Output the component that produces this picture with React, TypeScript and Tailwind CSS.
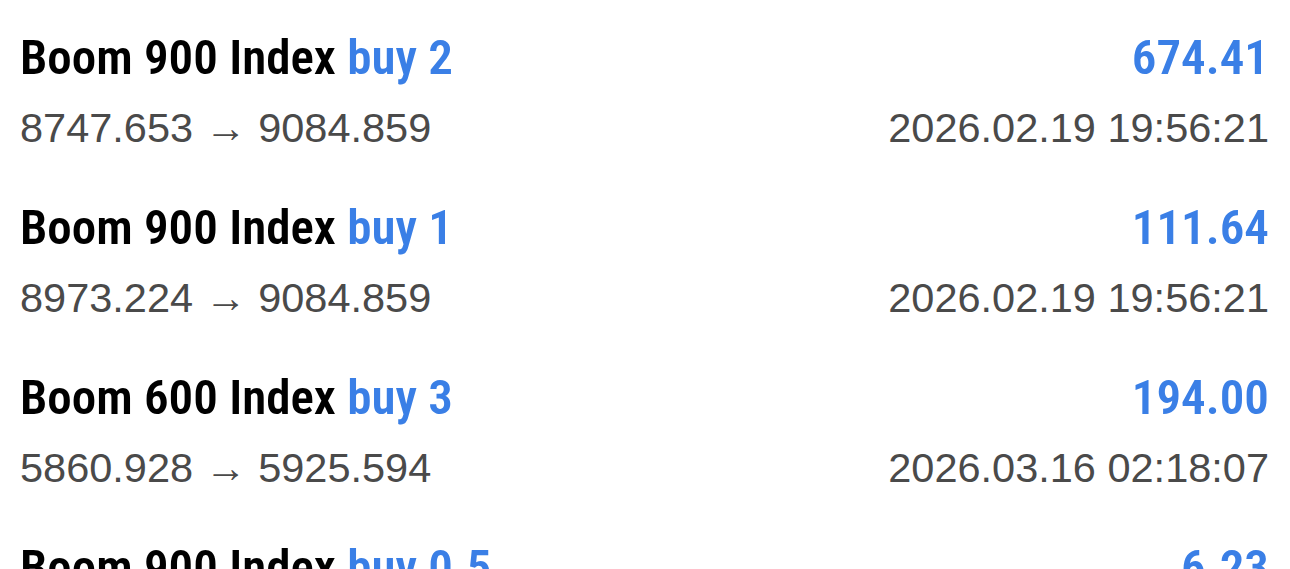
const rows = [
  { sym: "Boom 900 Index", side: "buy 2", profit: "674.41", from: "8747.653", to: "9084.859", time: "2026.02.19 19:56:21" },
  { sym: "Boom 900 Index", side: "buy 1", profit: "111.64", from: "8973.224", to: "9084.859", time: "2026.02.19 19:56:21" },
  { sym: "Boom 600 Index", side: "buy 3", profit: "194.00", from: "5860.928", to: "5925.594", time: "2026.03.16 02:18:07" },
  { sym: "Boom 900 Index", side: "buy 0.5", profit: "6.23", from: "9020.120", to: "9084.859", time: "2026.02.19 19:56:21" },
];

const titleFont = { fontFamily: "Roboto, 'Liberation Sans', sans-serif", fontStretch: "condensed" as const };

export default function App() {
  return (
    <div className="h-[569px] overflow-hidden bg-white">
      {rows.map((r, i) => (
        <div key={i} className="pl-[20px] pr-[21px] pt-[30px] pb-[18px]">
          <div className="flex justify-between text-[49px] leading-[56px] font-semibold" style={titleFont}>
            <div className="text-black">
              {r.sym} <span className="text-[#3a7fe6]">{r.side}</span>
            </div>
            <div className="text-[#3a7fe6]">{r.profit}</div>
          </div>
          <div className="mt-[18px] flex justify-between text-[41.5px] leading-[48px] text-[#4a4a4a] font-['Liberation_Sans',Arial,sans-serif]">
            <div>
              {r.from} <span className="inline-block w-[42px] text-center">→</span> {r.to}
            </div>
            <div>{r.time}</div>
          </div>
        </div>
      ))}
    </div>
  );
}
